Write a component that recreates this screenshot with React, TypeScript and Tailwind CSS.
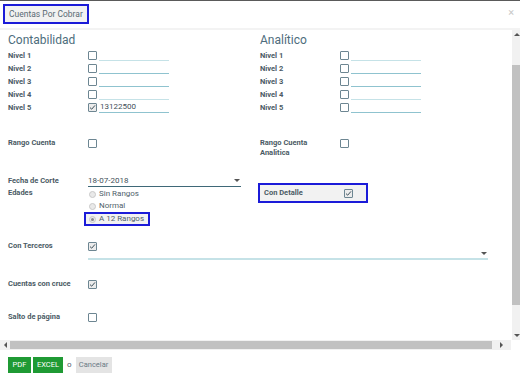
import { useState } from 'react';

function Check({ checked = false }: { checked?: boolean }) {
  return (
    <span
      className={`w-[9px] h-[9px] border border-[#6d8692] rounded-[1px] flex items-center justify-center shrink-0 ${
        checked ? 'bg-[#ececec]' : 'bg-white'
      }`}
    >
      {checked && (
        <svg width="7" height="7" viewBox="0 0 7 7">
          <path d="M1 3.6 L2.7 5.2 L6 1.4" fill="none" stroke="#3d4f59" strokeWidth="1" />
        </svg>
      )}
    </span>
  );
}

function Radio({ checked = false }: { checked?: boolean }) {
  return (
    <span className="w-[7px] h-[7px] rounded-full border border-[#c9c9c9] bg-[#e9e9e9] flex items-center justify-center shrink-0">
      {checked && <span className="w-[3px] h-[3px] rounded-full bg-[#8a8a8a]" />}
    </span>
  );
}

function Label({ children }: { children: React.ReactNode }) {
  return <span className="w-[80px] shrink-0 text-[7.5px] font-bold text-[#4b5b65] leading-[10px]">{children}</span>;
}

function NivelRow({ n, checked = false, value = '', light = false }: { n: number; checked?: boolean; value?: string; light?: boolean }) {
  return (
    <div className="h-[13px] flex items-center">
      <Label>Nivel {n}</Label>
      <Check checked={checked} />
      <div className={`ml-[2px] w-[70px] h-[11px] border-b ${light ? 'border-[#c5e2e7]' : 'border-[#8fc3cf]'} text-[8px] leading-[10px] text-[#3f4f59] pl-[1px]`}>
        {value}
      </div>
    </div>
  );
}

function Arrow({ dir }: { dir: 'up' | 'down' | 'left' | 'right' }) {
  const pts = {
    up: '0,4 3,1 6,4',
    down: '0,1 3,4 6,1',
    left: '4,0 1,3 4,6',
    right: '1,0 4,3 1,6',
  }[dir];
  const w = dir === 'up' || dir === 'down' ? 6 : 5;
  const h = dir === 'up' || dir === 'down' ? 5 : 6;
  return (
    <svg width={w} height={h} viewBox={`0 0 ${w} ${h}`}>
      <polygon points={pts} fill="#555" />
    </svg>
  );
}

export default function App() {
  const [edades, setEdades] = useState('a12');

  return (
    <div className="w-[520px] h-[381px] bg-white flex flex-col overflow-hidden" style={{ fontFamily: 'Roboto, "Liberation Sans", sans-serif' }}>
      <div className="h-[1px] bg-[#5a5a5a]" />

      {/* Header */}
      <div className="h-[27px] flex items-start justify-between pl-[3px] pr-[6px] pt-[3px]">
        <div className="h-[20px] w-[86px] px-[4px] border-2 border-[#1b1bd8] bg-[#f2f2f2] flex items-center text-[8.5px] text-[#5a6a73]">
          Cuentas Por Cobrar
        </div>
        <span className="text-[11px] text-[#c8c8c8] mt-[4px] leading-[10px]">×</span>
      </div>
      <div className="h-[2px] bg-[#f3f3f3]" />

      {/* Body */}
      <div className="flex h-[310px]">
        <div className="flex-1 pl-[8px] pt-[1px]">
          <div className="flex">
            <div className="w-[252px]">
              <h2 className="text-[12px] leading-[18px] text-[#4d6d7c]">Contabilidad</h2>
              <NivelRow n={1} light />
              <NivelRow n={2} />
              <NivelRow n={3} />
              <NivelRow n={4} light />
              <NivelRow n={5} checked value="13122500" />
            </div>
            <div className="w-[252px]">
              <h2 className="text-[12px] leading-[18px] text-[#4d6d7c]">Analítico</h2>
              <NivelRow n={1} light />
              <NivelRow n={2} />
              <NivelRow n={3} />
              <NivelRow n={4} light />
              <NivelRow n={5} />
            </div>
          </div>

          <div className="flex mt-[24px] h-[26px]">
            <div className="w-[252px] flex items-start">
              <Label>Rango Cuenta</Label>
              <span className="mt-[1px]"><Check /></span>
            </div>
            <div className="w-[252px] flex items-start">
              <Label>
                Rango Cuenta
                <br />
                Analitica
              </Label>
              <span className="mt-[1px]"><Check /></span>
            </div>
          </div>

          <div className="flex mt-[11px]">
            <div className="w-[252px]">
              <div className="flex items-center h-[12px]">
                <Label>Fecha de Corte</Label>
                <div className="w-[153px] h-[12px] border-b border-[#3f6878] flex items-center justify-between text-[8px] text-[#3f4f59]">
                  <span>18-07-2018</span>
                  <span className="mr-[1px]"><Arrow dir="down" /></span>
                </div>
              </div>
              <div className="flex items-start mt-[1px]">
                <Label>Edades</Label>
                <div className="flex flex-col -ml-[4px]">
                  {[
                    ['sin', 'Sin Rangos'],
                    ['normal', 'Normal'],
                    ['a12', 'A 12 Rangos'],
                  ].map(([k, t]) => (
                    <button
                      key={k}
                      onClick={() => setEdades(k)}
                      className={`h-[12px] flex items-center gap-[3px] px-[3px] text-[8px] text-[#50616b] ${
                        k === 'a12' ? 'h-[14px] w-[66px] border-2 border-[#1b1bd8] bg-[#f2f2f2]' : 'pl-[5px]'
                      }`}
                    >
                      <Radio checked={edades === k} />
                      {t}
                    </button>
                  ))}
                </div>
              </div>
            </div>
            <div className="w-[252px] pt-[8px] -ml-[2px]">
              <div className="w-[110px] h-[20px] border-2 border-[#1b1bd8] bg-[#f2f2f2] flex items-center pl-[4px]">
                <Label>Con Detalle</Label>
                <Check checked />
              </div>
            </div>
          </div>

          <div className="mt-[14px]">
            <div className="flex items-center h-[12px]">
              <Label>Con Terceros</Label>
              <Check checked />
            </div>
            <div className="ml-[80px] w-[400px] h-[8px] border-b-2 border-[#c5e2e7] flex justify-end items-start">
              <span className="-mt-[1px] mr-[1px]"><Arrow dir="down" /></span>
            </div>
          </div>

          <div className="flex items-center h-[12px] mt-[18px]">
            <Label>Cuentas con cruce</Label>
            <Check checked />
          </div>

          <div className="flex items-center h-[12px] mt-[21px]">
            <Label>Salto de página</Label>
            <Check />
          </div>
        </div>

        {/* Vertical scrollbar */}
        <div className="w-[9px] bg-[#f1f1f1] flex flex-col items-center">
          <div className="h-[9px] flex items-center"><Arrow dir="up" /></div>
          <div className="mt-[26px] w-[9px] h-[240px] bg-[#c1c1c1]" />
          <div className="flex-1" />
          <div className="h-[9px] flex items-center"><Arrow dir="down" /></div>
        </div>
      </div>

      {/* Horizontal scrollbar */}
      <div className="h-[10px] flex">
        <div className="flex-1 bg-[#f1f1f1] flex items-center">
          <div className="w-[10px] flex justify-center"><Arrow dir="left" /></div>
          <div className="w-[482px] h-[8px] bg-[#c1c1c1]" />
          <div className="flex-1 flex justify-center"><Arrow dir="right" /></div>
        </div>
        <div className="w-[9px] bg-white" />
      </div>

      {/* Footer */}
      <div className="flex items-center gap-[2px] pl-[8px] pt-[7px]">
        <button className="h-[16px] w-[23px] bg-[#1f9a34] text-white text-[7.5px]">PDF</button>
        <button className="h-[16px] w-[30px] bg-[#1f9a34] text-white text-[7.5px]">EXCEL</button>
        <span className="text-[8px] text-[#50616b] mx-[2px]">o</span>
        <button className="h-[16px] w-[36px] bg-[#e4e4e4] text-[#6a7a84] text-[7.5px]">Cancelar</button>
      </div>
    </div>
  );
}
